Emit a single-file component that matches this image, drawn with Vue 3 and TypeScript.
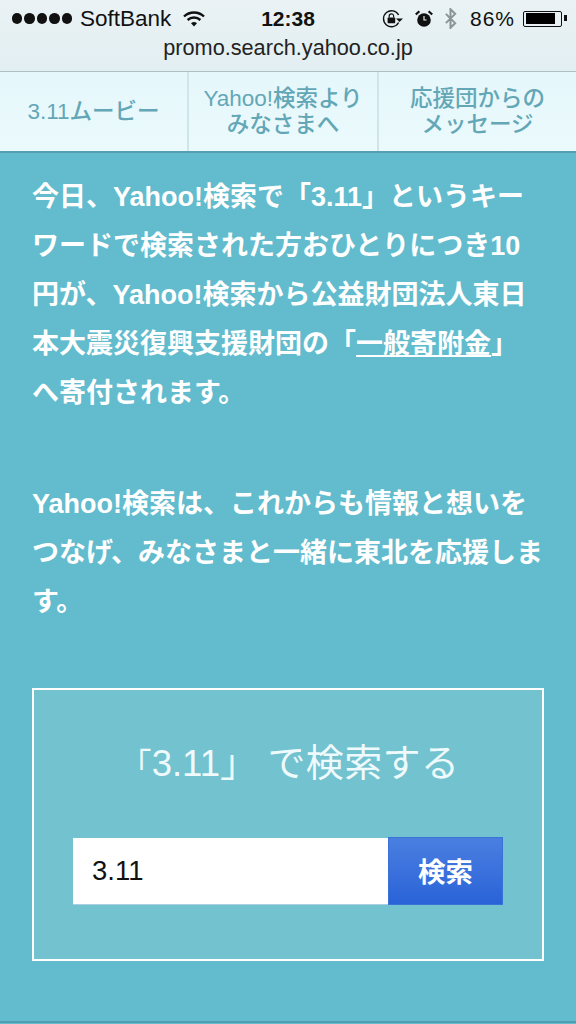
<script setup lang="ts">
const tabs = [
  { id: 'movie', lines: ['3.11ムービー'] },
  { id: 'yahoo', lines: ['Yahoo!検索より', 'みなさまへ'] },
  { id: 'msg', lines: ['応援団からの', 'メッセージ'] },
]
const dots = [1, 2, 3, 4, 5]
</script>

<template>
  <div class="page">
    <header class="chrome">
      <div class="status">
        <div class="left">
          <span class="dots"><i v-for="d in dots" :key="d"></i></span>
          <span class="carrier">SoftBank</span>
          <svg class="wifi" viewBox="0 0 22 16" width="22" height="16">
            <path d="M1 5.5a14.5 14.5 0 0 1 20 0" fill="none" stroke="#111" stroke-width="2.4"/>
            <path d="M4.6 9a9.4 9.4 0 0 1 12.8 0" fill="none" stroke="#111" stroke-width="2.4"/>
            <path d="M8 12.2a4.6 4.6 0 0 1 6 0L11 15.6z" fill="#111"/>
          </svg>
        </div>
        <span class="time">12:38</span>
        <div class="right">
          <svg class="lock" viewBox="0 0 22 20" width="22" height="20">
            <path d="M16.6 13.5A8 8 0 1 1 16.6 6" fill="none" stroke="#111" stroke-width="1.4"/>
            <path d="M14 9.5h7l-3.5 3.6z" fill="#111"/>
            <rect x="5.6" y="8.6" width="7.6" height="5.6" rx=".6" fill="#111"/>
            <path d="M7.2 8.6V7a2.2 2.2 0 0 1 4.4 0v1.6" fill="none" stroke="#111" stroke-width="1.2"/>
          </svg>
          <svg class="alarm" viewBox="0 0 18 18" width="18" height="18">
            <circle cx="9" cy="10" r="6.8" fill="#111"/>
            <path d="M.8 4.5 4.4 1.2M17.2 4.5 13.6 1.2" stroke="#111" stroke-width="2.2" fill="none"/>
            <path d="M9 6v4h2.6" stroke="#e8f2f4" stroke-width="1.2" fill="none"/>
          </svg>
          <svg class="bt" viewBox="0 0 14 22" width="13" height="21">
            <path d="M2 6l10 10-5 5V1l5 5L2 16" fill="none" stroke="#8b9496" stroke-width="2.2"/>
          </svg>
          <span class="pct">86%</span>
          <span class="battery"><span class="level"></span></span>
        </div>
      </div>
      <div class="url">promo.search.yahoo.co.jp</div>
    </header>

    <nav class="tabs">
      <a v-for="t in tabs" :key="t.id" class="tab" :class="t.id">
        <span v-for="l in t.lines" :key="l">{{ l }}</span>
      </a>
    </nav>

    <main class="main">
      <p class="para">
        今日、Yahoo!検索で「3.11」というキー<br>ワードで検索された方おひとりにつき10<br>円が、Yahoo!検索から公益財団法人東日<br>本大震災復興支援財団の「<a class="link">一般寄附金</a>」<br>へ寄付されます。
      </p>
      <p class="para second">
        Yahoo!検索は、これからも情報と想いを<br>つなげ、みなさまと一緒に東北を応援しま<br>す。
      </p>
      <section class="box">
        <h2 class="heading"><span class="open">「</span><span class="num">3.11</span>」<span class="tail">で検索する</span></h2>
        <form class="search" @submit.prevent>
          <input class="input" type="text" value="3.11" />
          <button class="btn" type="submit">検索</button>
        </form>
      </section>
    </main>
  </div>
</template>

<style>
html, body { margin: 0; background: #62bccd; }
</style>

<style scoped>
.page {
  width: 576px;
  height: 1024px;
  overflow: hidden;
  display: flex;
  flex-direction: column;
  font-family: "Liberation Sans", "Noto Sans CJK JP", sans-serif;
  background: #62bccd;
}
.chrome {
  box-sizing: border-box;
  background: linear-gradient(#eaf2f4, #e2eff2);
  border-bottom: 1px solid #aebfc4;
  flex: none;
  height: 72px;
}
.status {
  height: 37px;
  display: grid;
  grid-template-columns: 1fr auto 1fr;
  align-items: center;
  padding: 0 10px 0 12px;
  color: #111;
}
.left, .right { display: flex; align-items: center; }
.right { justify-content: flex-end; }
.dots { display: flex; gap: 2px; margin-right: 8px; }
.dots i { width: 10.4px; height: 10.4px; border-radius: 50%; background: #111; display: block; }
.carrier { font-size: 22.5px; }
.wifi { margin-left: 12px; }
.time { font-size: 21px; font-weight: 700; margin-right: 2px; }
.lock { margin-right: 11px; }
.alarm { margin-right: 11px; }
.bt { margin-right: 13px; }
.pct { font-size: 21px; margin-right: 8px; letter-spacing: 1px; }
.battery {
  box-sizing: border-box;
  width: 39px;
  height: 16px;
  border: 1.5px solid #111;
  border-radius: 2px;
  padding: 1.5px;
  position: relative;
  display: block;
  margin-right: 4px;
}
.battery::after {
  content: "";
  position: absolute;
  right: -5.5px;
  top: 3.5px;
  width: 3px;
  height: 6px;
  background: #111;
}
.level { display: block; width: 86%; height: 100%; background: #000; }
.url {
  text-align: center;
  font-size: 21.7px;
  line-height: 22px;
  color: #222;
}
.tabs {
  display: flex;
  height: 81px;
  flex: none;
  background: linear-gradient(#e6f7fb, #eafafd);
  border-bottom: 2px solid #569fb0;
  box-sizing: border-box;
}
.tab {
  display: flex;
  flex-direction: column;
  align-items: center;
  justify-content: center;
  color: #63a7b6;
  font-size: 22.5px;
  font-weight: 500;
  line-height: 26px;
  box-sizing: border-box;
  border-right: 2px solid #cfe5ea;
}
.tab.movie { width: 189px; }
.tab.yahoo { width: 190px; }
.tab.msg { flex: 1; border-right: none; }
.main {
  flex: 1;
  padding: 20px 32px 0;
  box-sizing: border-box;
  border-bottom: 2px solid #4f9fb0;
  margin-bottom: 1px;
}
.para {
  margin: 0;
  color: #fff;
  font-size: 27px;
  font-weight: 700;
  line-height: 49px;
  white-space: nowrap;
}
.para.second { margin-top: 62px; }
.link { color: #fff; text-decoration: underline; }
.box {
  margin-top: 61px;
  height: 273px;
  box-sizing: border-box;
  border: 2px solid #fff;
  background: #72c2cf;
  display: flex;
  flex-direction: column;
  align-items: center;
  padding-top: 50px;
}
.heading {
  margin: 0 0 0 3px;
  height: 46px;
  color: #eefafc;
  font-size: 38px;
  font-weight: 400;
  line-height: 46px;
  letter-spacing: 0.4px;
  text-spacing-trim: space-all;
  white-space: nowrap;
}
.open { font-size: 32px; letter-spacing: 0; }
.num { font-size: 36.5px; letter-spacing: 0; }
.tail { margin-left: 9px; }
.search {
  display: flex;
  margin-top: 51px;
  width: 430px;
  height: 68px;
}
.input {
  width: 315px;
  height: 67px;
  margin-top: 1px;
  box-sizing: border-box;
  border: none;
  border-bottom: 1px solid #a9cfe2;
  background: #fff;
  padding: 0 19px;
  font: 400 27.5px "Liberation Sans", sans-serif;
  color: #111;
  outline: none;
  border-radius: 0;
}
.btn {
  width: 115px;
  height: 68px;
  border: 1px solid #3a72d8;
  background: linear-gradient(#4a7fe0, #2a63d8);
  color: #fff;
  font: 700 27.5px "Liberation Sans", "Noto Sans CJK JP", sans-serif;
  padding: 0 0 3px;
}
</style>
